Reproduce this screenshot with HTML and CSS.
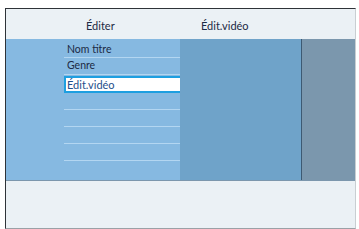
FILE: index.html
```html
<!DOCTYPE html>
<html lang="fr">

<head>
  <meta charset="UTF-8">
  <meta name="viewport" content="width=device-width, initial-scale=1.0">
  <title>Éditer</title>
  <link rel="stylesheet" href="styles.css">
</head>

<body>

  <div class="screen">
    <div class="screen-header">
      <div class="header-left">Éditer</div>
      <div class="header-mid">Édit.vidéo</div>
    </div>

    <div class="columns">
      <div class="col col-menu">
        <ul class="menu">
          <li class="menu-item first">Nom titre</li>
          <li class="menu-item">Genre</li>
          <li class="menu-item selected">Édit.vidéo</li>
          <li class="menu-item empty"></li>
          <li class="menu-item empty"></li>
          <li class="menu-item empty"></li>
          <li class="menu-item empty"></li>
        </ul>
      </div>
      <div class="col col-sub"></div>
      <div class="col col-side"></div>
    </div>

    <div class="screen-footer"></div>
  </div>

</body>

</html>
```

FILE: styles.css
```css
* {
  box-sizing: border-box;
  margin: 0;
  padding: 0;
}

body {
  font-family: 'Lato', 'Open Sans', sans-serif;
  background-color: #fff;
  width: 359px;
  height: 229px;
  overflow: hidden;
}

.screen {
  margin: 8px 0 0 5px;
  width: 351px;
  height: 221px;
  border-top: 1px solid #2e3338;
  border-left: 1px solid #2e3338;
  border-right: 1px solid #c9ced2;
  border-bottom: 1px solid #9aa1a6;
  background-color: #ebf1f5;
  display: flex;
  flex-direction: column;
}

.screen-header {
  height: 30px;
  display: grid;
  grid-template-columns: 174px 122px auto;
  align-items: center;
  color: #1c2a44;
  font-size: 11px;
  padding-top: 2px;
}

.header-left {
  padding-left: 80px;
}

.header-mid {
  padding-left: 21px;
}

.columns {
  height: 142px;
  display: grid;
  grid-template-columns: 174px 122px auto;
  border-bottom: 1px solid #7c97ad;
}

.col-menu {
  background-color: #86b9e1;
  padding-top: 4px;
}

.col-sub {
  background-color: #6fa3c9;
  border-right: 1px solid #3d5a73;
}

.col-side {
  background-color: #7b97ad;
}

.menu {
  list-style: none;
  margin-left: 58px;
  font-size: 10.5px;
  color: #1c2a44;
}

.menu-item {
  height: 17px;
  line-height: 15px;
  padding-left: 3px;
  border-bottom: 1px solid #b3d6f1;
}

.menu-item.first {
  height: 15px;
  line-height: 13px;
}

.menu-item.selected {
  height: 17px;
  line-height: 13px;
  background-color: #fff;
  border: 2px solid #1e9fe0;
  color: #1e4f8c;
  font-size: 11px;
  padding-left: 1px;
  margin-top: 1px;
  margin-right: -2px;
}

.screen-footer {
  flex: 1;
}
```
